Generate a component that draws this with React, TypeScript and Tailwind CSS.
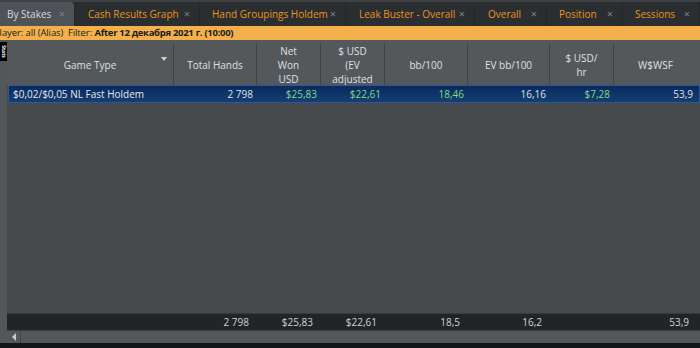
const tabs = [
  { label: 'By Stakes', w: 'w-[75px]', pl: 'pl-[7px]', active: true },
  { label: 'Cash Results Graph', w: 'w-[125px]', pl: 'pl-[13px]' },
  { label: 'Hand Groupings Holdem', w: 'w-[146px]', pl: 'pl-[12px]' },
  { label: 'Leak Buster - Overall', w: 'w-[129px]', pl: 'pl-[13px]' },
  { label: 'Overall', w: 'w-[72px]', pl: 'pl-[13px]' },
  { label: 'Position', w: 'w-[76px]', pl: 'pl-[12px]' },
  { label: 'Sessions', w: 'w-[77px]', pl: 'pl-[12px]' },
];

const cols = 'grid grid-cols-[167px_83px_64px_64px_83px_82px_64px_83px]';

const headers = [
  ['Total Hands'],
  ['Net', 'Won', 'USD'],
  ['$ USD', '(EV', 'adjusted'],
  ['bb/100'],
  ['EV bb/100'],
  ['$ USD/', 'hr'],
  ['W$WSF'],
];

const row = [
  { v: '2 798', green: false },
  { v: '$25,83', green: true },
  { v: '$22,61', green: true },
  { v: '18,46', green: true },
  { v: '16,16', green: false },
  { v: '$7,28', green: true },
  { v: '53,9', green: false },
];

const totals = ['2 798', '$25,83', '$22,61', '18,5', '16,2', '', '53,9'];

export default function App() {
  return (
    <div
      className="w-[700px] h-[348px] flex flex-col bg-[#141516] text-[10px] overflow-hidden"
      style={{ fontFamily: '"Open Sans", "Noto Sans", sans-serif' }}
    >
      {/* tabs */}
      <div className="h-[26px] flex items-end bg-[#2b2e31] border-t-2 border-[#3e4245]">
        {tabs.map((t) => (
          <div
            key={t.label}
            className={`${t.w} ${t.pl} h-full flex items-center pr-[9px] border-r border-[#25282b] ${
              t.active ? 'bg-[#4f5357] text-[#d6d9dc] rounded-tr-[4px]' : 'text-[#e7961f]'
            }`}
          >
            <span className="whitespace-nowrap">{t.label}</span>
            <span className="ml-auto text-[#7e8286] text-[11px]">×</span>
          </div>
        ))}
      </div>

      {/* filter bar */}
      <div className="h-[14px] bg-[#f4b14b] text-[#1b1b1b] text-[9.5px] leading-[14px] whitespace-nowrap -ml-[6px] font-medium tracking-[-0.1px]">
        Player: all (Alias)&nbsp;&nbsp;Filter: <span className="font-bold tracking-[-0.3px]">After 12 декабря 2021 г. (10:00)</span>
      </div>

      <div className="flex-1 flex">
        {/* side strip */}
        <div className="w-[8px] bg-[#54575a] flex flex-col">
          <div className="mt-[2px] h-[19px] w-[7px] bg-black flex items-center justify-center overflow-hidden">
            <span className="rotate-90 text-[5px] font-bold text-white leading-none">Stats</span>
          </div>
        </div>

        <div className="flex-1 flex flex-col">
          {/* header */}
          <div className={`${cols} h-[45px] bg-[#55585b] text-[#dde0e3] leading-[14px]`}>
            <div className="flex items-center justify-center relative border-r border-[#3f4245] my-[4px]">
              Game Type
              <span className="absolute right-[6px] top-[13px] w-0 h-0 border-l-[3px] border-r-[3px] border-t-[4px] border-l-transparent border-r-transparent border-t-[#d0d3d6]" />
            </div>
            {headers.map((h, i) => (
              <div
                key={i}
                className={`flex flex-col items-center justify-center text-center border-[#3f4245] my-[4px] ${
                  i < headers.length - 1 ? 'border-r' : ''
                }`}
              >
                {h.map((l) => (
                  <span key={l}>{l}</span>
                ))}
              </div>
            ))}
          </div>

          {/* body */}
          <div className="flex-1 bg-[#46494c] flex flex-col">
            <div
              className={`${cols} h-[18px] ml-[1px] items-center bg-gradient-to-b from-[#0b2a5e] to-[#153e72] border border-[#2a5898] leading-none`}
            >
              <div className="pl-[4px] text-[#e4e8ec] whitespace-nowrap">$0,02/$0,05 NL Fast Holdem</div>
              {row.map((c, i) => (
                <div key={i} className={`text-right pr-[6px] ${c.green ? 'text-[#7fdc86]' : 'text-[#dfe3e8]'}`}>
                  {c.v}
                </div>
              ))}
            </div>
          </div>

          {/* totals */}
          <div className={`${cols} h-[17px] bg-[#222528] border-t border-[#393c3f] items-center text-[#cfd2d5] leading-none`}>
            <div />
            {totals.map((v, i) => (
              <div key={i} className="text-right pr-[8px]">
                {v}
              </div>
            ))}
          </div>

          {/* scrollbar */}
          <div className="h-[13px] bg-[#54575a] flex border-t border-[#3e4144]">
            <div className="w-[13px] ml-[1px] flex items-center justify-center border-r border-[#3e4144]">
              <span className="w-0 h-0 border-t-[4px] border-b-[4px] border-r-[4px] border-t-transparent border-b-transparent border-r-[#c8cbce]" />
            </div>
          </div>
        </div>
      </div>
      <div className="h-[5px] bg-[#141516]" />
    </div>
  );
}
